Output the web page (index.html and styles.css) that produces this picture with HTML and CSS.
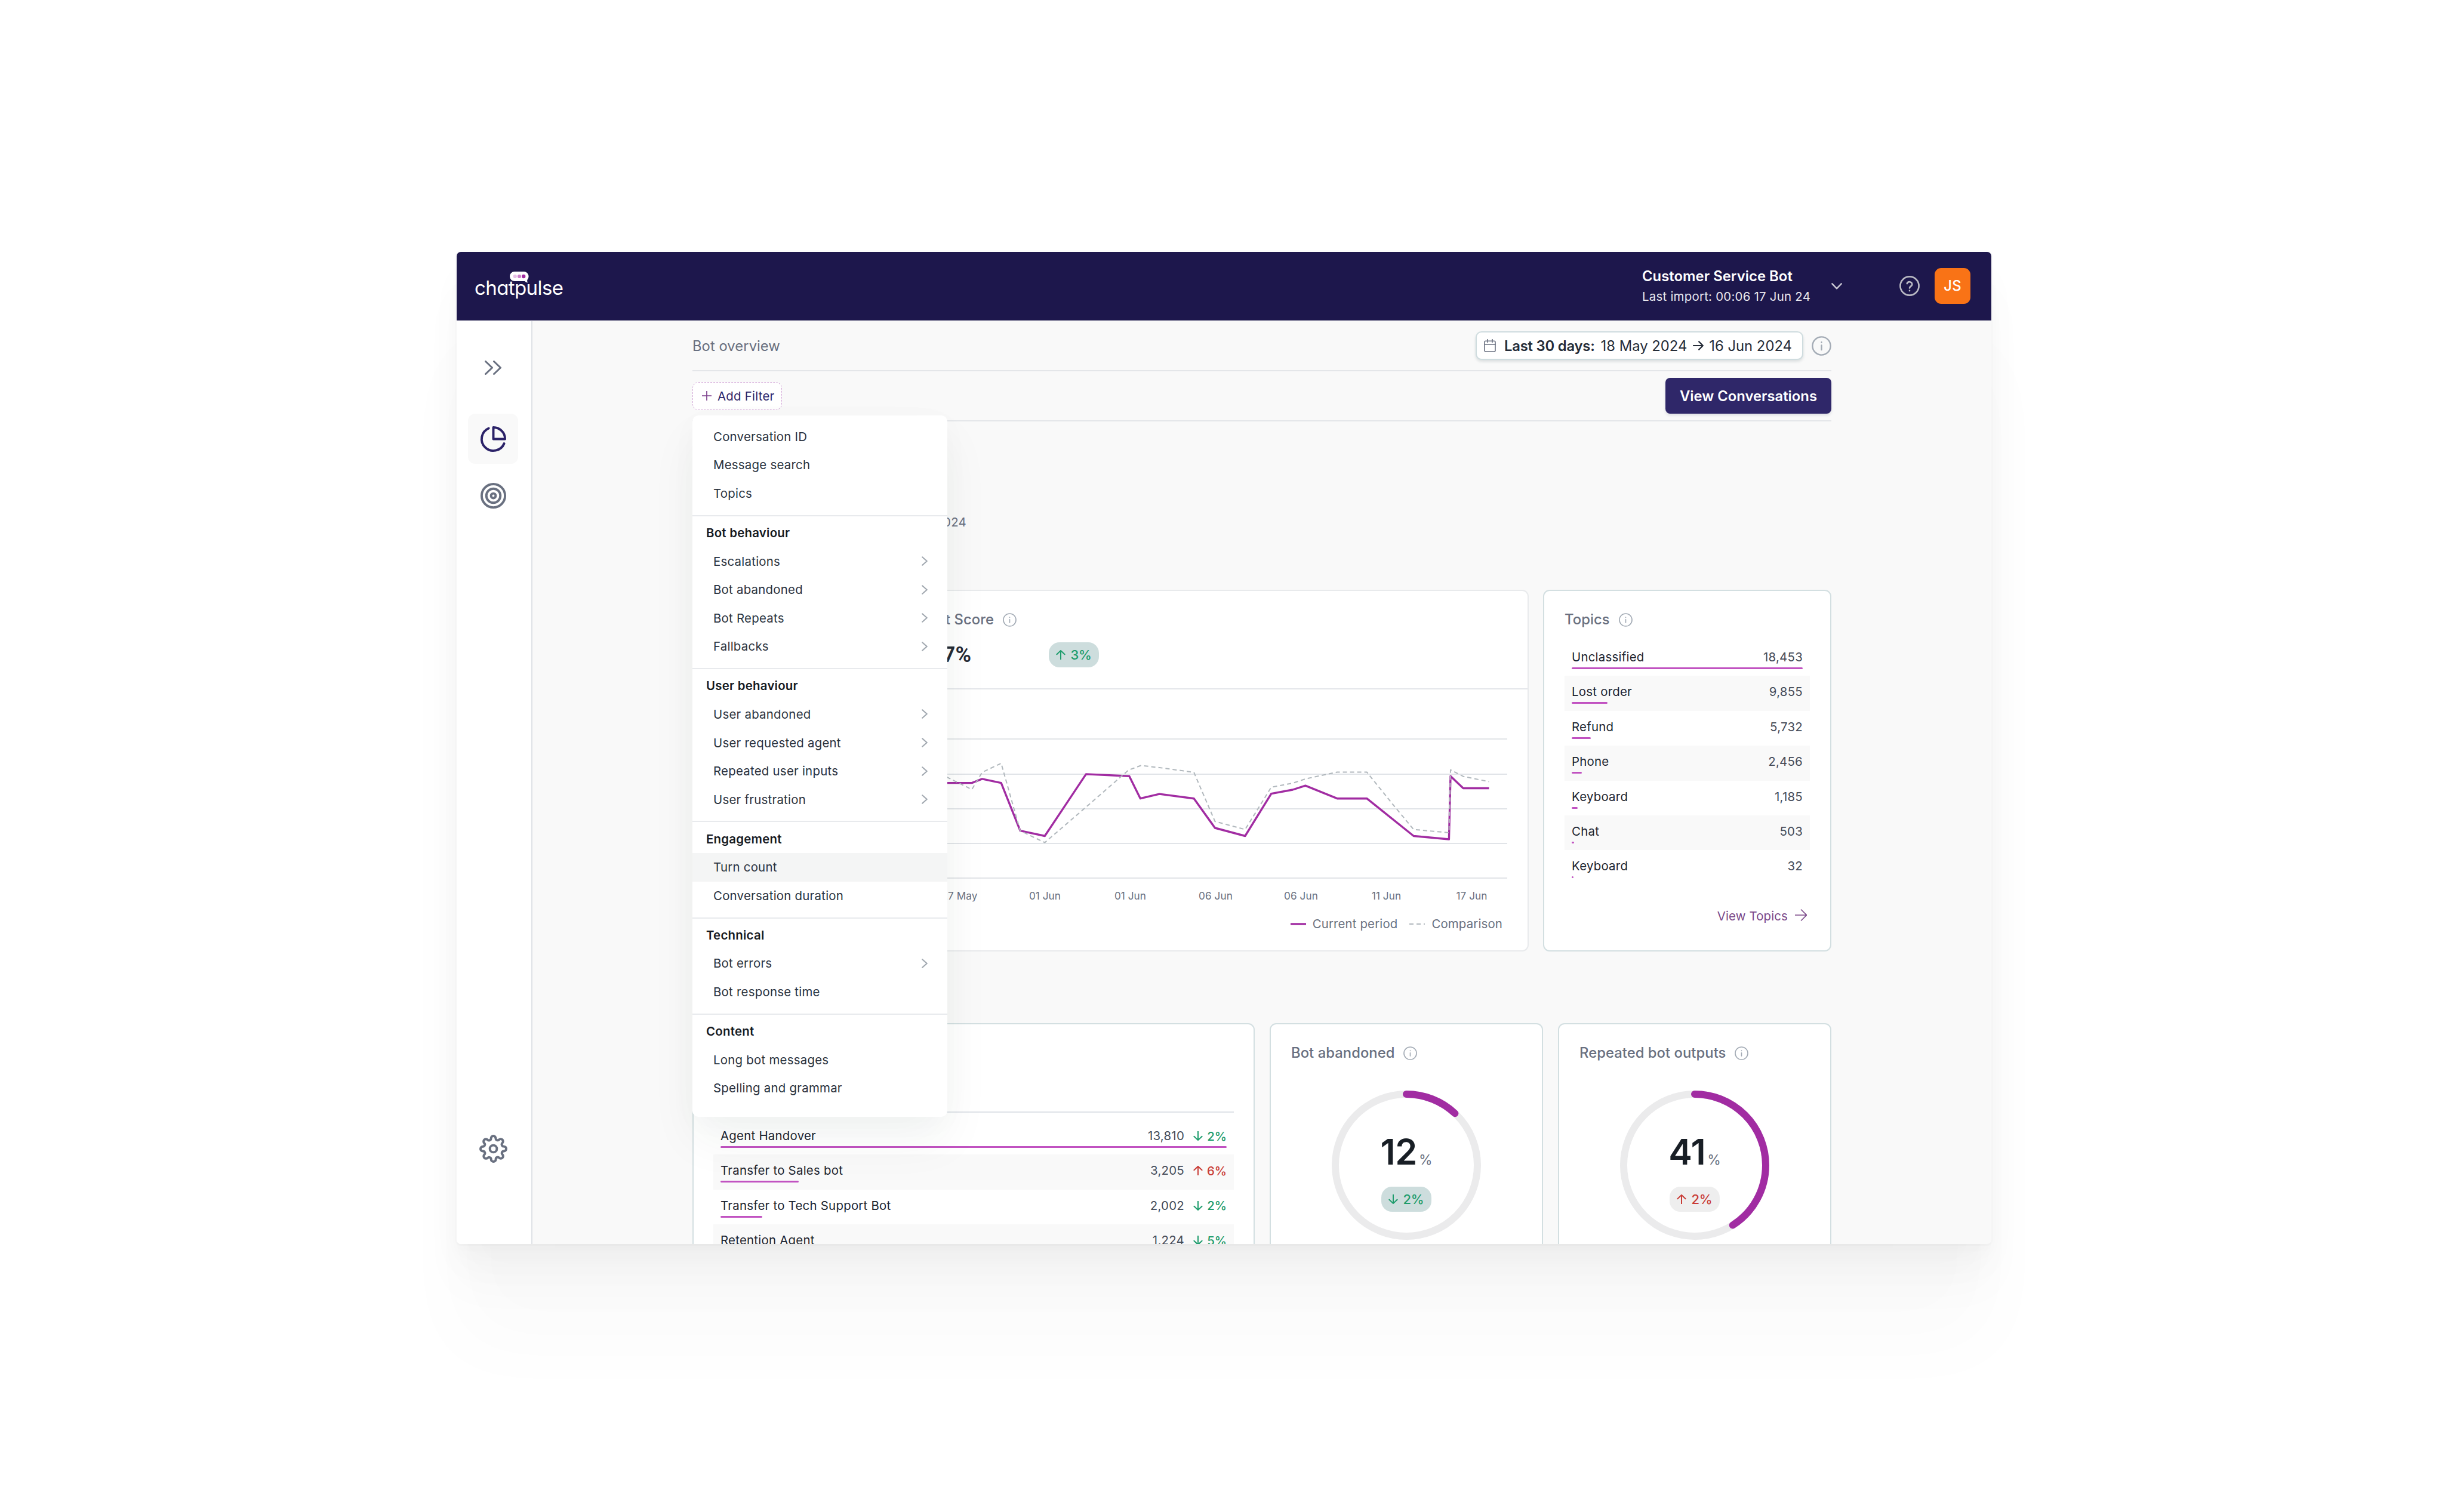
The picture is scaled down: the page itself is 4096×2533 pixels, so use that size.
FILE: index.html
```html
<!DOCTYPE html>
<html lang="en">
<head>
	<meta charset="utf-8" />
	<title>chatpulse - Bot overview</title>
	<link rel="stylesheet" href="styles.css">
</head>
<body>
	<!-- shared icons -->
	<svg class="sprite">
		<symbol id="i-info" viewBox="0 0 24 24"><circle cx="12" cy="12" r="11"></circle><path d="M12 11.2v5.6M12 7.4v.4"></path></symbol>
		<symbol id="i-right" viewBox="0 0 10 16"><path d="M1.2 1.2 8.8 8l-7.6 6.8"></path></symbol>
		<symbol id="i-up" viewBox="0 0 16 16"><path d="M8 15.4V1M1.4 7.2 8 .9l6.6 6.3"></path></symbol>
		<symbol id="i-down" viewBox="0 0 16 16"><path d="M8 .6V15M1.4 8.8 8 15.1l6.6-6.3"></path></symbol>
	</svg>

	<div class="app">
		<header class="header">
			<a class="logo" href="#">
				<svg class="logo-bubble" viewBox="0 0 32 20">
					<path fill="#fff" d="M8 0h15.500a8 8 0 0 1 6.300 12.900c-.9 1.300-.9 3.500.1 5.600-2-.3-3.600-1.100-4.700-2.500H8A8 8 0 0 1 8 0z"></path>
					<circle cx="8.800" cy="8" r="3.100" fill="#e6c0e6"></circle>
					<circle cx="16" cy="8" r="3.100" fill="#cb7fca"></circle>
					<circle cx="23.200" cy="8" r="3.200" fill="#a02ba0"></circle>
				</svg>
				<span>chatpulse</span>
			</a>
			<div class="bot-select">
				<div>
					<div class="bot-name">Customer Service Bot</div>
					<div class="bot-import">Last import: 00:06 17 Jun 24</div>
				</div>
				<svg class="chev-down" viewBox="0 0 18 11"><path d="M1.300 1.300 9 9.400l7.700-8.100"></path></svg>
			</div>
			<svg class="help" viewBox="0 0 24 24"><circle cx="12" cy="12" r="11"></circle><path d="M9 9.200a3.100 3.100 0 0 1 6 1c0 2-3 2.400-3 4.200M12 17.600v.1"></path></svg>
			<div class="avatar">JS</div>
		</header>

		<div class="body">
			<nav class="sidebar">
				<a class="nav-item nav-expand"><svg viewBox="0 0 28 24"><path d="M1.500 1.500 12.500 12l-11 10.500M15.500 1.500 26.500 12l-11 10.500"></path></svg></a>
				<a class="nav-item active"><svg viewBox="0 0 24 24"><path d="M21.210 15.890A10 10 0 1 1 8 2.830"></path><path d="M22 12A10 10 0 0 0 12 2v10z"></path></svg></a>
				<a class="nav-item"><svg viewBox="0 0 24 24"><circle cx="12" cy="12" r="10"></circle><circle cx="12" cy="12" r="6"></circle><circle cx="12" cy="12" r="2"></circle></svg></a>
				<a class="nav-item nav-settings"><svg viewBox="0 0 24 24"><circle cx="12" cy="12" r="3"></circle><path d="M19.400 15a1.650 1.650 0 0 0 .33 1.820l.06.06a2 2 0 0 1 0 2.830 2 2 0 0 1-2.830 0l-.06-.06a1.650 1.650 0 0 0-1.820-.33 1.650 1.650 0 0 0-1 1.510V21a2 2 0 0 1-2 2 2 2 0 0 1-2-2v-.09A1.650 1.650 0 0 0 9 19.400a1.650 1.650 0 0 0-1.820.33l-.06.06a2 2 0 0 1-2.830 0 2 2 0 0 1 0-2.830l.06-.06a1.650 1.650 0 0 0 .33-1.820 1.650 1.650 0 0 0-1.510-1H3a2 2 0 0 1-2-2 2 2 0 0 1 2-2h.09A1.650 1.650 0 0 0 4.600 9a1.650 1.650 0 0 0-.33-1.820l-.06-.06a2 2 0 0 1 0-2.830 2 2 0 0 1 2.830 0l.06.06a1.650 1.650 0 0 0 1.820.33H9a1.650 1.650 0 0 0 1-1.510V3a2 2 0 0 1 2-2 2 2 0 0 1 2 2v.09a1.650 1.650 0 0 0 1 1.510 1.650 1.650 0 0 0 1.820-.33l.06-.06a2 2 0 0 1 2.830 0 2 2 0 0 1 0 2.830l-.06.06a1.650 1.650 0 0 0-.33 1.820V9a1.650 1.650 0 0 0 1.510 1H21a2 2 0 0 1 2 2 2 2 0 0 1-2 2h-.09a1.650 1.650 0 0 0-1.510 1z"></path></svg></a>
			</nav>

			<main class="main">
				<div class="bar">
					<span class="crumb">Bot overview</span>
					<div class="bar-right">
						<button class="date">
							<svg class="calendar" viewBox="0 0 20 22"><rect x="1" y="3.300" width="18" height="17.700" rx="2"></rect><path d="M1 9h18M6 .4v5M14 .4v5"></path></svg>
							<b>Last 30 days:</b><span>18 May 2024</span>
							<svg class="date-arrow" viewBox="0 0 18 16"><path d="M1 8h15.600M10.200 1.400 16.800 8l-6.600 6.600"></path></svg>
							<span>16 Jun 2024</span>
						</button>
						<svg class="info info-lg"><use href="#i-info"></use></svg>
					</div>
				</div>
				<div class="bar">
					<div class="filter">
						<button class="add-filter"><svg viewBox="0 0 16 16"><path d="M8 0v16M0 8h16"></path></svg>Add Filter</button>
						<div class="menu">
							<div class="group">
								<a>Conversation ID</a>
								<a>Message search</a>
								<a>Topics</a>
							</div>
							<div class="group">
								<h4>Bot behaviour</h4>
								<a>Escalations<svg><use href="#i-right"></use></svg></a>
								<a>Bot abandoned<svg><use href="#i-right"></use></svg></a>
								<a>Bot Repeats<svg><use href="#i-right"></use></svg></a>
								<a>Fallbacks<svg><use href="#i-right"></use></svg></a>
							</div>
							<div class="group">
								<h4>User behaviour</h4>
								<a>User abandoned<svg><use href="#i-right"></use></svg></a>
								<a>User requested agent<svg><use href="#i-right"></use></svg></a>
								<a>Repeated user inputs<svg><use href="#i-right"></use></svg></a>
								<a>User frustration<svg><use href="#i-right"></use></svg></a>
							</div>
							<div class="group">
								<h4>Engagement</h4>
								<a class="hover">Turn count</a>
								<a>Conversation duration</a>
							</div>
							<div class="group">
								<h4>Technical</h4>
								<a>Bot errors<svg><use href="#i-right"></use></svg></a>
								<a>Bot response time</a>
							</div>
							<div class="group">
								<h4>Content</h4>
								<a>Long bot messages</a>
								<a>Spelling and grammar</a>
							</div>
						</div>
					</div>
					<button class="primary">View Conversations</button>
				</div>

				<div class="period"><p>18 May 2024 - 16 Jun 2024</p></div>

				<section class="row row-top">
					<article class="card score">
						<div class="score-head">
							<div class="score-title">Bot Score</div>
							<svg class="info"><use href="#i-info"></use></svg>
						</div>
						<div class="score-value">
							<strong>87%</strong>
							<span class="pill good"><svg><use href="#i-up"></use></svg>3%</span>
						</div>
						<div class="chart">
							<svg class="plot" viewBox="0 0 1330 250">
								<path class="grid" d="M0 7h1330M0 66h1330M0 124h1330M0 182h1330M0 240h1330"></path>
								<polyline class="current" points="300,80.600 433.100,80.600 450.300,73.900 482.200,80.600 514.100,160.700 555.300,169.500 624.400,65.900 696.800,69.200 715.400,106.700 747.300,99.100 805.100,106.700 840.400,156 890.900,169.500 934.700,98.700 970.600,92 991.900,85.200 1045,106.700 1094.800,106.700 1173.200,169.500 1232.400,175 1235,69.200 1256.300,89.500 1299.500,89.500"></polyline>
								<polyline class="compare" points="300,40 390.500,70.500 433.100,91.600 450.300,62.900 482.200,47.700 514.100,160.700 555.300,180.500 624.400,121.100 695.500,59.100 716.100,51.500 747.300,54.900 805.100,62.900 840.400,145.100 890.900,158.600 934.700,87.800 970.600,81 991.900,73.900 1045,62.500 1094.800,62.500 1141.300,120.200 1173.200,158.600 1232.400,164 1235,58.700 1256.300,69.700 1299.500,78.500"></polyline>
							</svg>
							<div class="dates">
								<span>17 May</span><span>22 May</span><span>27 May</span><span>01 Jun</span><span>01 Jun</span><span>06 Jun</span><span>06 Jun</span><span>11 Jun</span><span>17 Jun</span>
							</div>
							<div class="legend">
								<svg viewBox="0 0 26 4"><path class="current" d="M0 2h26"></path></svg>Current period
								<svg class="second" viewBox="0 0 26 4"><path class="compare" d="M0 2h26"></path></svg>Comparison
							</div>
						</div>
					</article>

					<article class="card topics">
						<h3>Topics <svg class="info"><use href="#i-info"></use></svg></h3>
						<ul class="list">
							<li><span>Unclassified</span><em>18,453</em><i style="width:100%"></i></li>
							<li><span>Lost order</span><em>9,855</em><i style="width:15.5%"></i></li>
							<li><span>Refund</span><em>5,732</em><i style="width:8.3%"></i></li>
							<li><span>Phone</span><em>2,456</em><i style="width:4.3%"></i></li>
							<li><span>Keyboard</span><em>1,185</em><i style="width:2.5%"></i></li>
							<li><span>Chat</span><em>503</em><i style="width:1.1%"></i></li>
							<li><span>Keyboard</span><em>32</em><i style="width:0.8%"></i></li>
						</ul>
						<a class="more">View Topics <svg viewBox="0 0 20 20"><path d="M.5 10h18.500M10.500 1l9 9-9 9"></path></svg></a>
					</article>
				</section>

				<section class="row row-bottom">
					<article class="card escalations">
						<h3>Escalations <svg class="info"><use href="#i-info"></use></svg></h3>
						<ul class="list">
							<li><span>Agent Handover</span><em>13,810</em><b class="good"><svg><use href="#i-down"></use></svg>2%</b><i style="width:100%"></i></li>
							<li><span>Transfer to Sales bot</span><em>3,205</em><b class="bad"><svg><use href="#i-up"></use></svg>6%</b><i style="width:15.5%"></i></li>
							<li><span>Transfer to Tech Support Bot</span><em>2,002</em><b class="good"><svg><use href="#i-down"></use></svg>2%</b><i style="width:8.3%"></i></li>
							<li><span>Retention Agent</span><em>1,224</em><b class="good"><svg><use href="#i-down"></use></svg>5%</b><i style="width:5%"></i></li>
						</ul>
					</article>
					<article class="card gauge">
						<h3>Bot abandoned <svg class="info"><use href="#i-info"></use></svg></h3>
						<div class="ring">
							<svg viewBox="0 0 250 250"><circle class="track" cx="125" cy="125" r="119"></circle><circle class="fill" cx="125" cy="125" r="119" pathLength="100" stroke-dasharray="12 100"></circle></svg>
							<div class="ring-text">
								<div class="ring-value">12<small>%</small></div>
								<span class="pill good"><svg><use href="#i-down"></use></svg>2%</span>
							</div>
						</div>
					</article>
					<article class="card gauge">
						<h3>Repeated bot outputs <svg class="info"><use href="#i-info"></use></svg></h3>
						<div class="ring">
							<svg viewBox="0 0 250 250"><circle class="track" cx="125" cy="125" r="119"></circle><circle class="fill" cx="125" cy="125" r="119" pathLength="100" stroke-dasharray="41 100"></circle></svg>
							<div class="ring-text">
								<div class="ring-value">41<small>%</small></div>
								<span class="pill bad"><svg><use href="#i-up"></use></svg>2%</span>
							</div>
						</div>
					</article>
				</section>
			</main>
		</div>
	</div>
</body>
</html>
```
FILE: styles.css
```css
* {box-sizing:border-box;}
body {margin:0; padding:422px 0 0 765px; height:2533px; font-family:Inter,"Liberation Sans",sans-serif; font-size:20.4px; letter-spacing:.25px; color:#1c2430; background:#fff; overflow:hidden;}
h3, h4, p, ul {margin:0; padding:0;}
button {font-family:inherit; letter-spacing:inherit; margin:0;}
svg {fill:none; stroke:currentColor; stroke-linecap:round; stroke-linejoin:round; flex:none;}

.sprite {position:absolute; width:0; height:0;}

.app {width:2571px; height:1662px; border-radius:7px; overflow:hidden; background:#f9f9f9;
	box-shadow:0 170px 136px rgba(0,0,0,.02), 0 71px 80px rgba(0,0,0,.022), 0 38px 60px rgba(0,10,8,.022), 0 21px 30px rgba(0,10,8,.01), 0 11px 9px rgba(0,0,0,.006), 0 4px 4px rgba(0,0,0,.006), 0 0 0 3px rgba(0,20,20,.012);}

/* header */
.header {display:flex; align-items:center; height:116px; padding:0 35px 0 30px; background:#1d174c; border-bottom:2px solid #8f8da5; color:#fff;}
.logo {display:flex; flex-direction:column; width:150px; margin-top:-7px; color:#fff; font-size:33px; line-height:30px; letter-spacing:-.6px; font-feature-settings:"cv11"; text-decoration:none;}
.logo-bubble {width:32px; height:20px; margin:0 0 -8px 59px; stroke:none;}
.bot-select {display:flex; align-items:center; margin-left:auto; width:335px; justify-content:space-between;}
.bot-name {font-size:23.8px; font-weight:600; line-height:34px; letter-spacing:.05px;}
.bot-import {line-height:33px; color:#e9e8ef;}
.chev-down {width:18px; height:11px; stroke-width:2.4; color:#c9c8d3;}
.help {width:34px; height:34px; margin-left:96px; stroke-width:1.9; color:#b9b9c3;}
.avatar {width:60px; height:60px; margin-left:25px; border-radius:11px; background:#f97316; font-size:23.8px; font-weight:500; line-height:60px; text-align:center;}

.body {display:flex; height:1546px;}

/* sidebar */
.sidebar {display:flex; flex-direction:column; align-items:center; width:127px; padding:36px 3px 118px 0; background:#fff; border-right:2px solid #dfe2e6; color:#697080;}
.nav-item {display:flex; align-items:center; justify-content:center; width:84px; height:84px; margin-bottom:11px; border-radius:12px;}
.nav-item svg {width:47px; height:47px; stroke-width:2;}
.nav-expand {margin-bottom:35px;}
.nav-expand svg {width:28px; height:24px; stroke-width:3;}
.nav-item.active {background:#f9f9f9; color:#2b2268;}
.nav-settings {margin:auto 0 0;}

/* page */
.main {width:2444px; padding:0 268px;}
.bar {display:flex; align-items:center; justify-content:space-between; height:84px; border-bottom:2px solid #e4e6e9;}
.crumb {font-size:23.8px; letter-spacing:.05px; color:#697080;}
.bar-right {display:flex; align-items:center; gap:14px;}
.date {display:flex; align-items:center; height:48px; width:549px; padding:0 17px 0 12px; border:2px solid #cfdcdf; border-radius:10px; background:#fff; box-shadow:0 3px 4px rgba(40,70,80,.14); font-size:23.8px; letter-spacing:0; color:#252c38;}
.date b {font-weight:600; letter-spacing:-.2px; margin:0 10px 0 14px;}
.calendar {width:20px; height:22px; stroke-width:1.6; color:#697080;}
.date-arrow {width:18px; height:16px; margin:0 9px 0 10px; stroke-width:2.2;}
.info {width:23px; height:23px; stroke-width:1.7; color:#a3abb5;}
.info-lg {width:33px; height:33px;}

.filter {position:relative;}
.add-filter {display:flex; align-items:center; height:47px; width:150px; padding:0 0 0 15px; gap:10px; border:1px dashed #d3a9d8; border-radius:10px; background:#fff; font-size:20.4px; color:#2b2268;}
.add-filter svg {width:16px; height:16px; stroke-width:1.7; color:#7c3f8c;}
.primary {width:278px; height:60px; padding:0; border:0; border-radius:8px; background:#2f2769; color:#fff; font-size:23.8px; font-weight:600; letter-spacing:0; box-shadow:0 3px 4px rgba(40,50,80,.12);}

.menu {position:absolute; left:0; top:56px; z-index:2; width:427px; padding-top:8px; border-radius:10px; background:#fff; box-shadow:0 40px 80px rgba(20,50,40,.05), 0 10px 50px rgba(20,50,40,.025);}
.group {padding:4px 0 12.4px; border-top:2px solid #e8eaed;}
.group:first-child {border-top:0;}
.group:last-child {padding-bottom:24px;}
.group h4, .group a {display:flex; align-items:center; justify-content:space-between; height:47.6px; font-size:20.4px;}
.group h4 {padding-left:23px; font-weight:600; color:#15191f;}
.group a {padding:0 33px 0 35px; color:#2a323e;}
.group a.hover {background:#f4f5f5;}
.group svg {width:10px; height:16px; stroke-width:2; color:#a0a7af;}

.period {height:282px; padding-top:154px; color:#697080;}
.period p {width:459px; line-height:30px; text-align:right;}

/* cards */
.row {display:flex; gap:24px;}
.row-bottom {margin-top:120px; gap:25px;}
.card {background:#fff; border:2px solid #d3dfe1; border-radius:11px;}
.card h3 {display:flex; align-items:center; gap:15px; font-size:23.8px; font-weight:500; line-height:30px; letter-spacing:.05px; color:#697080;}

.score {width:1401px; height:606px; border-color:#e8eaec;}
.score-head {display:flex; align-items:center; gap:15px; padding-top:33px; font-size:23.8px; font-weight:500; line-height:30px; letter-spacing:.05px; color:#697080;}
.score-title {width:503px; text-align:right;}
.score-value {display:flex; align-items:center; height:102px; padding-bottom:12px; border-bottom:2px solid #e4e6ea;}
.score-value strong {width:465px; text-align:right; font-family:Roboto,Inter,sans-serif; font-size:36px; font-weight:600; letter-spacing:0; color:#252a34;}
.score-value .pill {margin-left:130px;}
.pill {display:flex; align-items:center; justify-content:center; gap:8px; width:84px; height:42px; border-radius:18px; font-size:22px; font-weight:500; letter-spacing:-.2px;}
.pill svg {width:16px; height:16px; stroke-width:2;}
.good {color:#1d9c6c;}
.bad {color:#c93c36;}
.pill.good {background:#cddddd;}
.pill.bad {background:#eeeeee;}

.chart {padding:76px 33px 0;}
.plot {display:block; width:1330px; height:250px;}
.grid {stroke:#e1e4e8; stroke-width:2; stroke-linecap:butt;}
.current {stroke:#a12ca2; stroke-width:3.4; stroke-linecap:butt;}
.compare {stroke:#b1b8bd; stroke-width:2; stroke-dasharray:7 5; stroke-linecap:butt;}
.dates {display:flex; margin:9px 0 0 55px; width:1287px; font-size:17.200px; line-height:22px; letter-spacing:.05px; color:#697080;}
.dates span {width:143px; flex:none; text-align:center;}
.legend {display:flex; align-items:center; justify-content:flex-end; margin-top:22px; padding-right:9px; line-height:28px; letter-spacing:.15px; color:#697080;}
.legend svg {width:26px; height:4px; margin-right:11px;}
.legend .second {margin-left:20px;}

.topics {width:483px; padding:33px 34px 0 34px;}
.list {list-style:none; margin-top:21px;}
.list li {display:grid; grid-template-columns:1fr auto auto; grid-template-rows:26px 3px; row-gap:4px; height:58.400px; padding:14px 12px 11px;}
.list li:nth-child(even) {background:#f9f9f9;}
.list span, .list em {line-height:26px;}
.list em {font-style:normal; color:#454c59;}
.list b {display:flex; align-items:center; gap:7px; width:71px; justify-content:flex-end; font-weight:500; letter-spacing:0;}
.list b svg {width:16px; height:16px; stroke-width:2;}
.list i {grid-column:1 / -1; height:3px; border-radius:2px; background:#c152c1;}
.more {display:flex; align-items:center; justify-content:flex-end; gap:12px; margin:38px 5px 0 0; line-height:28px; letter-spacing:.15px; color:#7a4788;}
.more svg {width:20px; height:20px; margin-top:-4px; stroke-width:1.600;}

.escalations {width:942px; height:500px; padding:33px 33px 0;}
.escalations .list {margin-top:83px; padding-top:12px; border-top:2px solid #dfe2e8;}
.gauge {width:458px; height:500px; padding:33px 34px 0;}
.ring {position:relative; width:250px; height:250px; margin:48px auto 0;}
.ring > svg {display:block; width:250px; height:250px; transform:rotate(-90deg);}
.track {stroke:#ebebec; stroke-width:12;}
.fill {stroke:#a12ca2; stroke-width:12;}
.ring-text {position:absolute; top:0; left:0; width:250px; padding-top:66px; display:flex; flex-direction:column; align-items:center;}
.ring-value {margin-bottom:9px; font-size:59.500px; font-weight:600; line-height:72px; letter-spacing:-.4px; color:#181e25;}
.ring-value small {margin-left:3px; font-size:23px; font-weight:400; letter-spacing:0; color:#697080;}
```
